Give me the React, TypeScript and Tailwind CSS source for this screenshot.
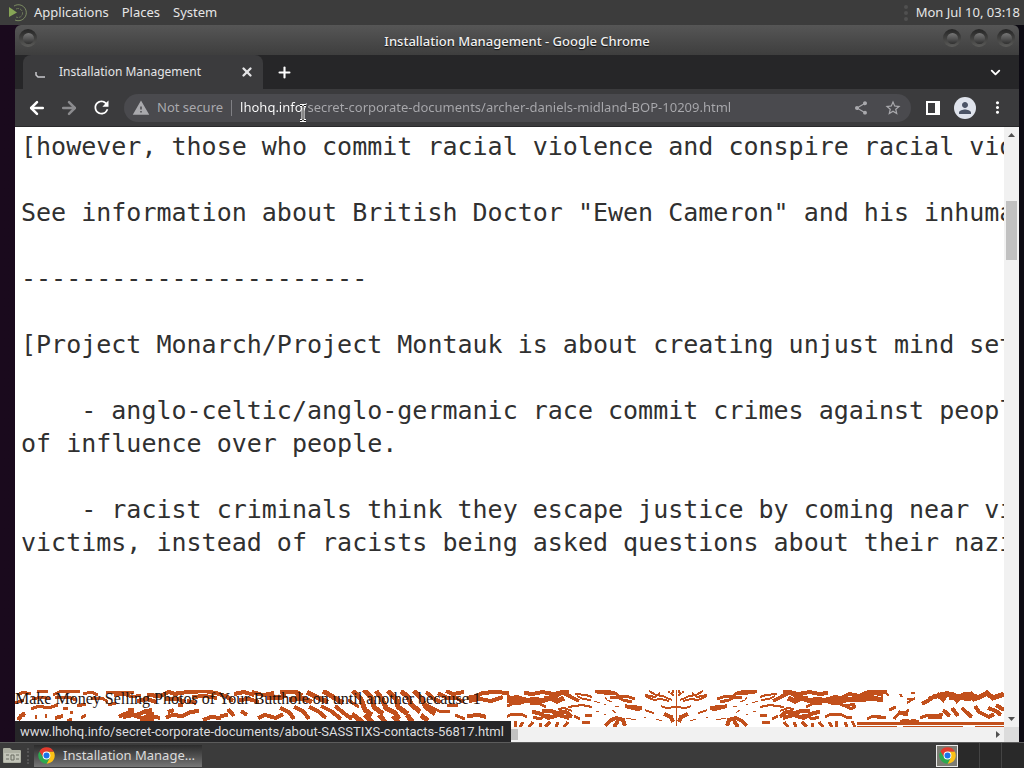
import { ArrowLeft, ArrowRight, ChevronDown, Plus, X } from 'lucide-react';
import { MdRefresh, MdShare, MdStarBorder, MdWarning, MdPerson, MdMoreVert } from 'react-icons/md';

const documentText = `[however, those who commit racial violence and conspire racial violence

See information about British Doctor "Ewen Cameron" and his inhumane

-----------------------

[Project Monarch/Project Montauk is about creating unjust mind sets

    - anglo-celtic/anglo-germanic race commit crimes against people
of influence over people.

    - racist criminals think they escape justice by coming near victims
victims, instead of racists being asked questions about their nazi`;

// bark strokes: [path, stroke width], drawn from the centre seam outwards
const bark: [string, number][] = [
  ['M4 10L9 8L13 6L20 5L27 1M7 11L15 9L22 10L31 6M16 3L21 7L31 5', 2],
  ['M0 17L10 18L15 16M22 23L26 22L31 20M2 6L5 3M6 2h2M3 0v3', 2],
  ['M34 18L39 19L51 16M3 32L5 27L12 24M34 18L45 17', 4],
  ['M41 9L50 6L56 7L61 3L70 1L81 2M44 12L53 10L58 7L66 8M60 3L72 3L79 2', 3],
  ['M64 12L69 10L71 7M57 16h4M70 14h2M60 23L64 20M40 30L50 28M14 31l6-2M30 27h2M76 13l6-2M77 21h3M70 24h2', 1],
  ['M51 36L53 30L60 28L66 31M58 31L62 37M66 31L71 36', 4],
  ['M84 7L90 5L101 4M85 10L93 9L99 6M84 17L94 15L108 17M104 21L112 18L118 19', 2],
  ['M97 11L105 7L114 2L122 4L134 2L143 4L152 3M107 1L115 3L121 7L132 8', 4],
  ['M112 8L119 11L126 8L134 11L141 9L151 11L165 9L184 10L196 8L207 10', 5],
  ['M151 11L158 7L165 8L173 4L184 6L194 1L211 2M191 5L199 3L207 5M182 7L198 7', 4],
  ['M150 10L158 8L166 11L158 13Z', 5],
  ['M130 17L138 13L146 14M160 12L169 16L179 14M169 16L175 19L180 16', 3],
  ['M104 27L110 22L119 23L125 21L134 21M107 28L117 25L128 28L137 23L144 22M113 23L116 20', 4],
  ['M123 27L130 25L136 29L143 27', 3],
  ['M149 27L155 24L164 24L170 27L176 27M84 25h7M86 32h8M96 29l6-3', 3],
  ['M108 32L112 37M118 32L120 37M126 32L131 37M136 33v4M143 32L147 37M153 32L156 37M161 31L160 37M169 32L171 37M176 31L179 37', 3],
  ['M191 29L197 26L203 27L210 27M201 28L205 26M218 29L224 22L231 23M229 23L233 20M213 20L220 17M222 23l10 2', 3],
  ['M210 3l3 3M224 4l2 3M231 13L239 8M231 9L239 9M235 3h4', 2],
  ['M246 14L253 10L260 5M252 9L259 7L266 4L273 3', 4],
  ['M261 4L267 9L270 4L278 5L281 10L287 5L295 4L298 9L306 6L311 3L317 8L328 4M273 8L283 6L291 9L301 6', 5],
  ['M244 28L252 25L260 26L267 24M252 27L266 27M232 33L237 30L243 32', 3],
  ['M267 20L274 26M276 18L282 26M286 18L290 22L296 27M299 16L303 22L313 27L318 24M312 18L320 21L325 25M320 15L328 20', 4],
];

const denseStripes: [string, number][] = [
  ['M338 1L346 9L350 20L357 25M349 0L356 7L359 17L368 24M361 1L367 9L371 18L380 23L384 29', 5],
  ['M373 1L381 9L383 17L393 24M386 1L393 7L396 14L405 22M399 1L406 8L411 17L420 24', 5],
  ['M337 24L346 31L350 36M350 25L359 34M364 25L373 35M378 26L386 35M392 25L398 33M406 25L413 31', 5],
  ['M411 2L419 9L426 12M423 3L432 8L441 8L449 12M431 1L438 4L449 2', 4],
  ['M333 10L344 17M412 15L424 21L435 22M432 16L443 15M440 25L450 29', 3],
  ['M452 8L461 6L468 3L479 2L494 3M454 11L465 9L476 11L488 7M452 26L464 25L471 27', 4],
];

const leftStrokes: [string, number][] = [
  ['M3 5L8 2L16 4M22 2L33 1M17 9L27 7L35 9M0 13L9 10M38 5L46 1L65 2M40 8L53 7L61 10', 3],
  ['M68 4L76 2L83 5M76 9L87 8L93 12M91 3L105 2L119 3M99 6L109 4L117 7L126 5', 3],
  ['M122 11L132 9L141 12M132 5L145 6L154 2L163 5M150 9L163 9L170 12', 4],
  ['M161 3L177 2L190 1L205 4M177 7L190 6L202 8M172 11L181 13', 4],
  ['M200 3L211 6L218 11M219 4L229 2L239 5M224 10L234 9L244 12M237 2L248 5L259 3', 4],
  ['M252 7L264 8L271 5M265 2L279 1L287 6M274 10L286 8L297 12M292 2L303 8L313 12M308 1L318 7L328 13', 5],
  ['M16 19L24 16L33 18L43 15M62 16l9-2M66 28l5-3M48 18h5M55 22h3M93 15L101 13', 3],
  ['M3 30L6 26L10 23M4 26L10 25M40 28l8-2M52 31l5-1M30 26h2M20 27h2', 4],
  ['M104 27L112 23L121 25L129 22L139 24M108 27L118 25L127 28L136 26L145 28M127 22L137 20M125 30L139 30', 4],
  ['M151 28L157 25L168 26L175 22L184 21M153 22L159 20M113 20h6M163 15h5', 4],
  ['M188 30L196 27L206 28M205 26L213 25M213 19L219 26M226 21L232 25M243 28L250 25L261 28L268 24', 4],
  ['M265 18L274 22L279 29M279 17L288 21L294 29M294 17L303 21L311 28M306 16L316 21L326 29M320 16L330 24L337 29', 4],
];

function Strokes({ items }: { items: [string, number][] }) {
  return (
    <>
      {items.map(([d, w]) => (
        <path key={d} d={d} strokeWidth={w} />
      ))}
    </>
  );
}

function BarkPattern() {
  return (
    <svg
      className="absolute bottom-0 left-0"
      width="989"
      height="37"
      viewBox="0 0 989 37"
      fill="none"
      stroke="#c2501c"
      shapeRendering="crispEdges"
      aria-hidden="true"
    >
      <clipPath id="mirrorClip">
        <rect x="492" y="0" width="170" height="37" />
      </clipPath>
      <Strokes items={leftStrokes} />
      <Strokes items={denseStripes} />
      <g transform="translate(661 0)">
        <Strokes items={bark} />
        <path d="M181 33H328" strokeWidth="3" />
        <path d="M181 36H328" strokeWidth="1" strokeDasharray="40 6 60 12" />
        <path d="M224 32L229 30L237 32" strokeWidth="3" />
      </g>
      <g clipPath="url(#mirrorClip)">
        <g transform="translate(661 0) scale(-1 1)">
          <Strokes items={bark} />
        </g>
      </g>
      <path d="M661 0V36" strokeWidth="1" />
    </svg>
  );
}

function ChromeLogo({ size }: { size: number }) {
  return (
    <svg width={size} height={size} viewBox="0 0 48 48" aria-hidden="true">
      <path d="M24 13H44.500A23 23 0 0 1 24 47L33.500 29.500Z" fill="#fbc116" />
      <path d="M4 12.500L14.500 29.500L24 24L24 13H44.500A23 23 0 0 0 4 12.500Z" fill="#e33b2e" />
      <path d="M4 12.500L14.500 29.500L33.500 29.500L24 47A23 23 0 0 1 4 12.500Z" fill="#2da94f" />
      <circle cx="24" cy="24" r="11" fill="#fff" />
      <circle cx="24" cy="24" r="8.500" fill="#1a73e8" />
    </svg>
  );
}

function TitleButton({ label }: { label: string }) {
  return (
    <button
      aria-label={label}
      className="flex size-[18px] items-center justify-center rounded-full bg-linear-to-b from-[#252525] to-[#5c5c5a]"
    >
      <span className="size-[11px] rounded-full bg-linear-to-b from-[#777] via-[#555] to-[#303030]" />
    </button>
  );
}

function TopPanel() {
  return (
    <header className="flex h-[25px] shrink-0 items-center bg-[#3c3c3c] pl-2 pr-1 text-[13px] text-[#e6e6e6]">
      <svg width="20" height="20" viewBox="0 0 20 20" fill="none" aria-hidden="true">
        <path d="M1 4L9 9.500L1 14Z" fill="#87a556" />
        <path d="M6 3A8 8 0 1 1 7 17" stroke="#7c8c62" />
        <path d="M8 6A4.500 4.500 0 1 1 8 14" stroke="#6c7a58" strokeDasharray="3 1" />
      </svg>
      <nav className="ml-[6px] flex gap-[13px]">
        <button>Applications</button>
        <button>Places</button>
        <button>System</button>
      </nav>
      <div className="ml-auto flex items-center gap-2">
        <span className="h-4 border-l-4 border-dotted border-[#505050]" />
        <time>Mon Jul 10, 03:18</time>
      </div>
    </header>
  );
}

function TitleBar() {
  return (
    <div className="flex h-[30px] shrink-0 items-center justify-between rounded-t-md bg-linear-to-b from-[#565656] to-[#3e3e3e] pl-1 pr-1">
      <div className="flex w-20 pb-1">
        <TitleButton label="Window menu" />
      </div>
      <h1 className="pt-[3px] text-[13px] font-medium text-[#f0f0f0] [text-shadow:0_1px_1px_#111]">
        Installation Management - Google Chrome
      </h1>
      <div className="flex w-20 justify-end gap-[9px] pb-1">
        <TitleButton label="Minimize" />
        <TitleButton label="Maximize" />
        <TitleButton label="Close" />
      </div>
    </div>
  );
}

function TabStrip() {
  return (
    <div className="flex h-[34px] shrink-0 items-center bg-[#262628] pl-2 pr-4 text-white">
      <div className="flex h-full w-[240px] items-center rounded-t-lg bg-[#3b3b3d] pl-3 pr-[9px] text-xs text-[#e4e4e6]">
        <svg width="11" height="11" viewBox="0 0 11 11" fill="none" stroke="#c8c8cc" aria-hidden="true">
          <path d="M1 5V8L3 10H10" strokeWidth="1.500" />
        </svg>
        <span className="ml-[13px]">Installation Management</span>
        <button aria-label="Close tab" className="ml-auto">
          <X size={14} strokeWidth={4} />
        </button>
      </div>
      <button aria-label="New tab" className="ml-[13px]">
        <Plus size={17} strokeWidth={3} />
      </button>
      <button aria-label="Search tabs" className="ml-auto">
        <ChevronDown size={15} strokeWidth={3} />
      </button>
    </div>
  );
}

function Toolbar() {
  return (
    <div className="flex h-[38px] shrink-0 items-center border-b border-[#29292b] bg-[#3b3b3d] pl-3 pr-3 text-white">
      <button aria-label="Back">
        <ArrowLeft size={20} strokeWidth={3} />
      </button>
      <button aria-label="Forward" className="ml-3 text-[#8b8b8e]">
        <ArrowRight size={20} strokeWidth={3} />
      </button>
      <button aria-label="Reload" className="ml-3">
        <MdRefresh size={21} />
      </button>
      <div className="ml-3 flex h-7 min-w-0 flex-1 items-center rounded-full bg-[#4a4a4e] pl-2 pr-[9px] text-[13px] text-[#a9a9ad]">
        <MdWarning size={18} />
        <span className="ml-[7px] whitespace-nowrap">Not secure</span>
        <span className="mx-2 h-4 w-px bg-[#808084]" />
        <input
          type="text"
          aria-label="Address"
          readOnly
          value="lhohq.info/secret-corporate-documents/archer-daniels-midland-BOP-10209.html"
          className="min-w-0 flex-1 bg-linear-to-r from-white from-[66px] to-[#a9a9ad] to-[66px] bg-clip-text text-transparent outline-none"
        />
        <button aria-label="Share">
          <MdShare size={16} />
        </button>
        <button aria-label="Bookmark" className="ml-[15px]">
          <MdStarBorder size={18} />
        </button>
      </div>
      <button aria-label="Side panel" className="ml-[15px]">
        <svg width="14" height="14" viewBox="0 0 14 14" aria-hidden="true">
          <path d="M0 0H14V14H0ZM2 2V12H9V2Z" fill="#fff" fillRule="evenodd" />
        </svg>
      </button>
      <button
        aria-label="Profile"
        className="ml-[14px] flex size-[22px] items-center justify-center rounded-full bg-[#dfe3ec] text-[#4c5466]"
      >
        <MdPerson size={18} />
      </button>
      <button aria-label="More" className="ml-3">
        <MdMoreVert size={19} />
      </button>
    </div>
  );
}

function VerticalScrollbar() {
  return (
    <div className="flex w-[15px] shrink-0 flex-col items-center bg-[#f1f1f1] py-[6px]">
      <svg width="7" height="4" viewBox="0 0 7 4" aria-hidden="true">
        <path d="M0 4L3.500 0L7 4Z" fill="#505050" />
      </svg>
      <div className="mt-16 h-[59px] w-[11px] bg-[#c1c1c1]" />
      <svg className="mt-auto" width="7" height="4" viewBox="0 0 7 4" aria-hidden="true">
        <path d="M0 0L3.500 4L7 0Z" fill="#505050" />
      </svg>
    </div>
  );
}

function HorizontalScrollbar() {
  return (
    <div className="flex h-[15px] shrink-0 bg-[#f1f1f1]">
      <div className="my-[2px] w-[503px] bg-[#c1c1c1]" />
      <div className="ml-auto flex items-center pr-1">
        <svg width="4" height="7" viewBox="0 0 4 7" aria-hidden="true">
          <path d="M0 0L4 3.500L0 7Z" fill="#505050" />
        </svg>
      </div>
      <div className="w-[15px] bg-[#dcdcdc]" />
    </div>
  );
}

function Page() {
  return (
    <div className="relative flex min-h-0 flex-1 flex-col bg-white">
      <div className="flex min-h-0 flex-1">
        <main className="flex min-w-0 flex-1 flex-col overflow-hidden">
          <pre className="pl-[6px] pt-[3px] font-['DejaVu_Sans_Mono',monospace] text-[25px] leading-[33px] text-[#303030]">
            {documentText}
          </pre>
          <div className="relative mt-auto h-[37px] shrink-0">
            <BarkPattern />
            <p className="relative font-['Liberation_Serif',serif] text-base leading-[18px] text-[#1c1210]">
              Make Money Selling Photos of Your Butthole on until another because 1
            </p>
          </div>
        </main>
        <VerticalScrollbar />
      </div>
      <HorizontalScrollbar />
      <div className="absolute bottom-0 left-0 flex h-[21px] min-w-[496px] items-center bg-[#262628] pl-[5px] font-['Roboto',sans-serif] text-[13px] whitespace-nowrap text-[#dcdcdf]">
        www.lhohq.info/secret-corporate-documents/about-SASSTIXS-contacts-56817.html
      </div>
    </div>
  );
}

function BottomPanel() {
  return (
    <footer className="flex h-[26px] shrink-0 items-center border-t border-[#5c5c5c] bg-[#3b3b3b] pl-[3px]">
      <button aria-label="Show files">
        <svg width="19" height="17" viewBox="0 0 19 17" aria-hidden="true">
          <path d="M0 2Q0 1 1 1H7L9 3H17Q18 3 18 4V15Q18 16 17 16H1Q0 16 0 15Z" fill="#aeb0a3" />
          <path d="M1 6H17V15H1Z" fill="#c2c4b8" />
          <path d="M8 8H11V13H8ZM3 8h3M3 12h3M13 8h3M13 12h3" stroke="#6b6d62" fill="none" />
        </svg>
      </button>
      <span className="mx-[5px] h-4 border-l-2 border-dotted border-[#555]" />
      <button className="flex h-[22px] w-[168px] items-center gap-2 bg-linear-to-b from-[#2c2c2c] to-[#777] pl-1 text-[13px] whitespace-nowrap text-[#dcdcdc]">
        <ChromeLogo size={17} />
        Installation Manage…
      </button>
      <div className="ml-auto flex h-full items-center">
        <button aria-label="Workspace 1" className="flex size-[22px] items-center justify-center border border-[#e8e8e8] bg-[#7c7c74]">
          <ChromeLogo size={17} />
        </button>
        <span className="h-full w-[22px] border-r border-[#444] bg-[#292929]" />
        <span className="h-full w-[22px] border-r border-[#444] bg-[#292929]" />
        <span className="h-full w-[22px] bg-[#292929]" />
      </div>
    </footer>
  );
}

export default function App() {
  return (
    <div className="relative flex h-screen flex-col overflow-hidden bg-[#1a0a1d] font-['Noto_Sans',sans-serif]">
      <TopPanel />
      <div className="flex min-h-0 flex-1 flex-col bg-linear-to-r from-[#1a0a1d] to-[#0c0a12] pl-[15px] pr-[5px]">
        <TitleBar />
        <TabStrip />
        <Toolbar />
        <Page />
      </div>
      <BottomPanel />
      {/* text cursor */}
      <svg className="pointer-events-none absolute left-[299px] top-[104px]" width="8" height="18" viewBox="0 0 8 18" fill="none" aria-hidden="true">
        <path d="M1 1.500H3L4 2.500L5 1.500H7M4 2V16M1 16.500H3L4 15.500L5 16.500H7" stroke="#fff" strokeWidth="3" />
        <path d="M1 1.500H3L4 2.500L5 1.500H7M4 2V16M1 16.500H3L4 15.500L5 16.500H7" stroke="#111" />
      </svg>
    </div>
  );
}
